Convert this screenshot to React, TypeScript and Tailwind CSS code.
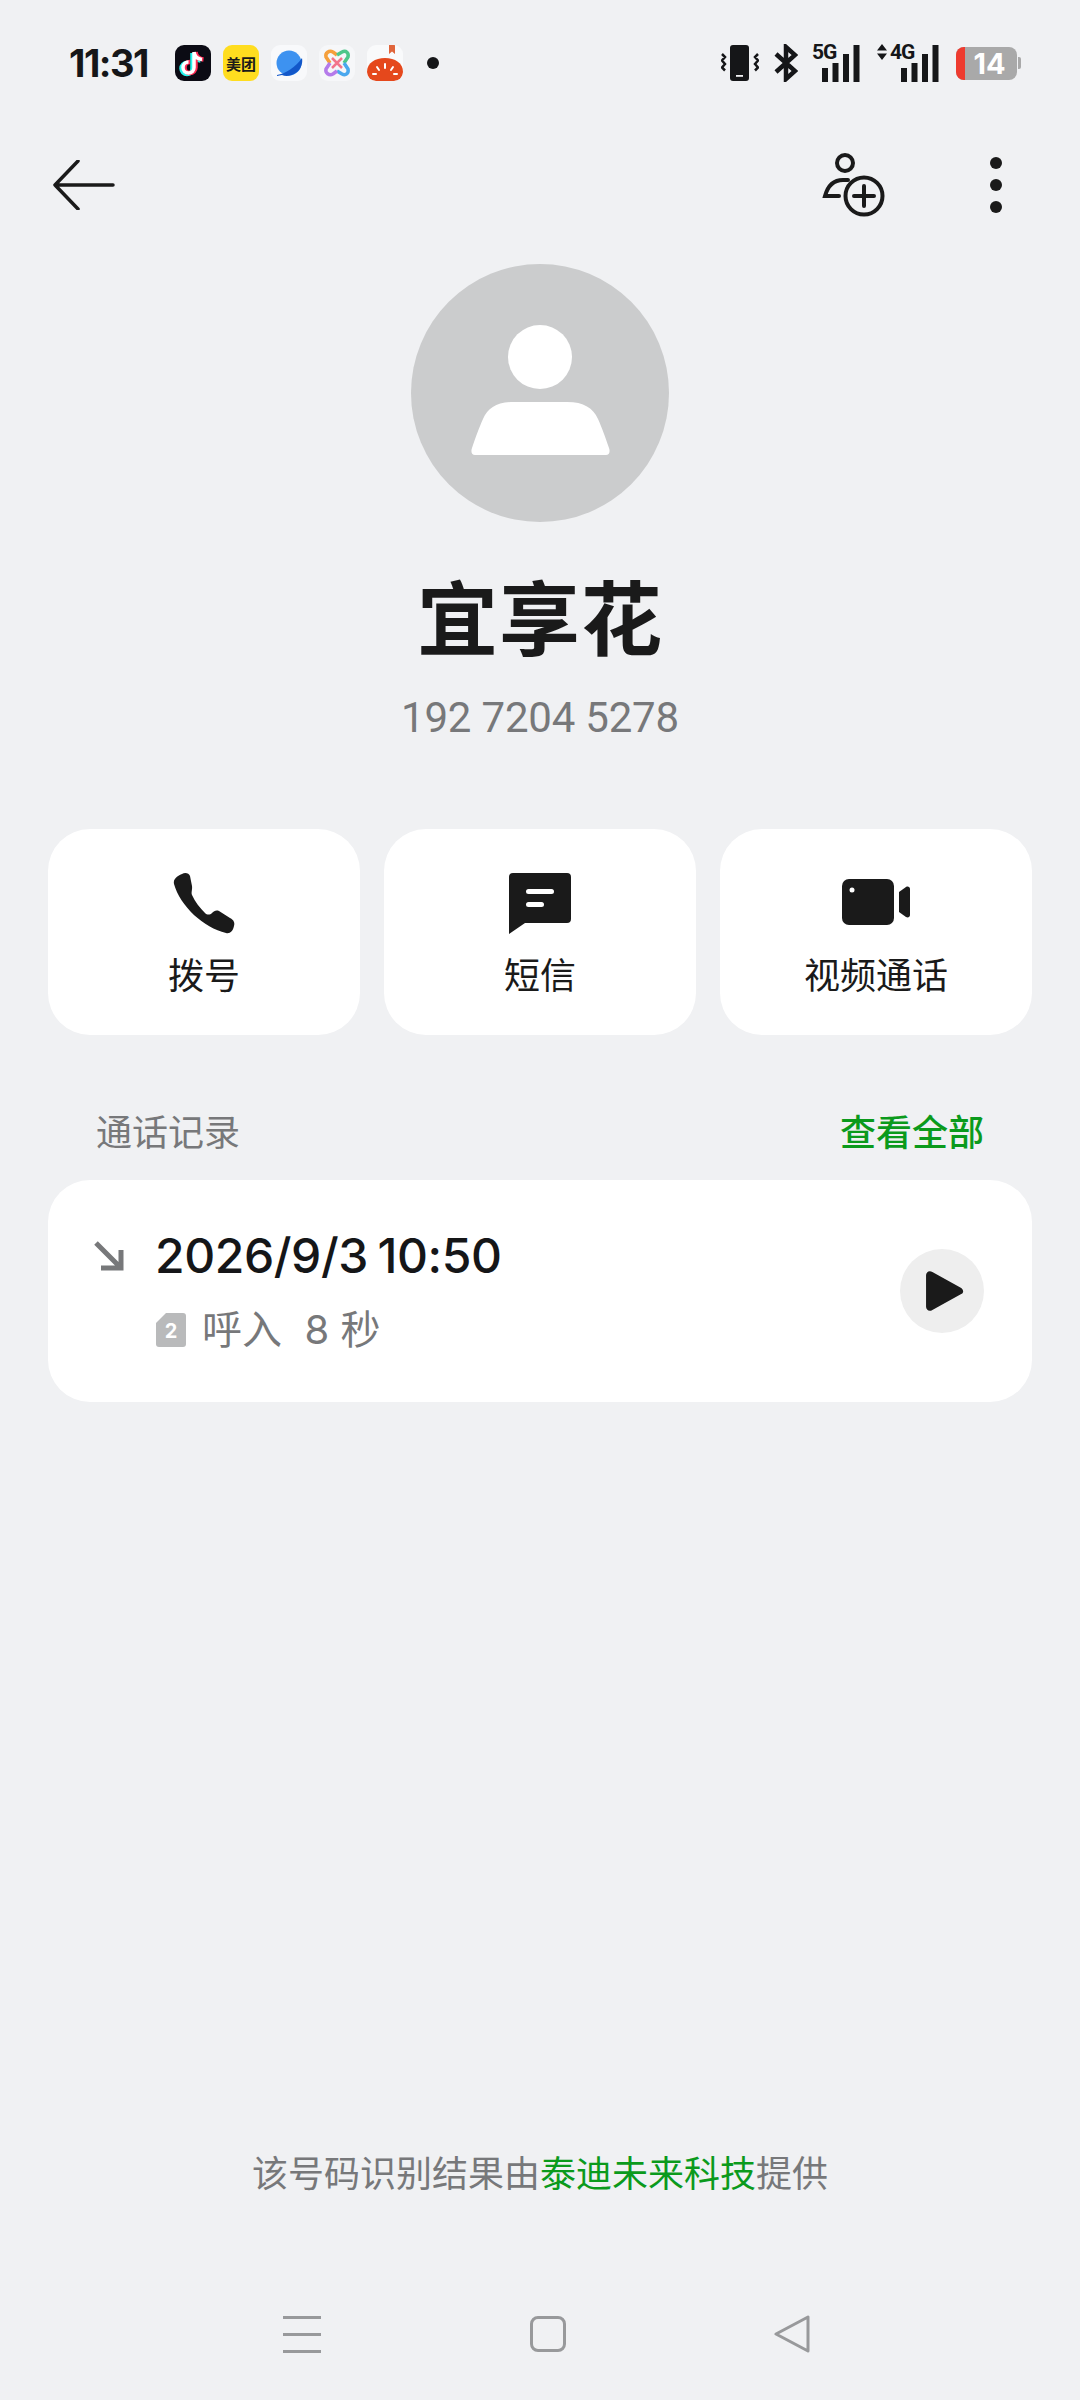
const sans = "font-['Inter','Noto_Sans_CJK_SC',sans-serif]"

function AppIcon({ className, children }: { className: string; children: React.ReactNode }) {
  return <div className={`size-9 rounded-[9px] overflow-hidden flex items-center justify-center ${className}`}>{children}</div>
}

function SignalBars({ className }: { className: string }) {
  return (
    <svg viewBox="0 0 38 37" className={`absolute bottom-0 w-[38px] h-[37px] ${className}`} fill="#151618">
      <rect x="0" y="23" width="6" height="14" />
      <rect x="10.500" y="18" width="6" height="19" />
      <rect x="21" y="9" width="6" height="28" />
      <rect x="31.500" y="0" width="6" height="37" />
    </svg>
  )
}

function StatusBar() {
  return (
    <div className="h-[124px] pt-[2px] flex items-center pl-[69px] pr-[59px]">
      <span className="text-[38px] leading-none font-bold text-[#151618] tracking-[-1.5px] w-[84px] font-['Inter',sans-serif]">11:31</span>
      <div className="flex items-center gap-[12px] ml-[22px]">
        <AppIcon className="bg-[#0b0b14]">
          <svg viewBox="0 0 36 36" className="size-9" fill="none" strokeWidth="4.500">
            <path d="M19 7v15.500a5.500 5.500 0 1 1-5.500-5.500M19 7c.5 4 3.500 7 8 7.500" stroke="#25f4ee" transform="translate(-1.500 1)" />
            <path d="M19 7v15.500a5.500 5.500 0 1 1-5.500-5.500M19 7c.5 4 3.500 7 8 7.500" stroke="#fe2c55" transform="translate(1.500 0)" />
            <path d="M19 7v15.500a5.500 5.500 0 1 1-5.500-5.500M19 7c.5 4 3.500 7 8 7.500" stroke="#fff" strokeWidth="3.500" />
          </svg>
        </AppIcon>
        <AppIcon className="bg-[#ffdd1f]">
          <span className="text-[15px] leading-none font-bold text-[#1a1a1a] whitespace-nowrap font-['Noto_Sans_CJK_SC',sans-serif]">美团</span>
        </AppIcon>
        <AppIcon className="bg-[#f8f9fb]">
          <svg viewBox="0 0 36 36" className="size-9">
            <circle cx="18" cy="18" r="12.500" fill="#3d92f0" />
            <path d="M6 30c8-1 19-8 25-17 1 5-1 11-5 14-5 4-11 5-15 3l-5 1z" fill="#1257c9" />
          </svg>
        </AppIcon>
        <AppIcon className="bg-[#f6f7f9]">
          <svg viewBox="0 0 36 36" className="size-9" fill="none" strokeWidth="3.500">
            <path d="M11 18 7 12c-1-4 3-7 7-5l4 3" stroke="#f5a03c" />
            <path d="m18 10 5-3c4-2 7 1 6 5l-4 6" stroke="#4fc78a" />
            <path d="m25 18 4 6c1 4-2 7-6 5l-5-3" stroke="#4aa8ee" />
            <path d="m18 26-4 3c-4 2-8-1-7-5l4-6" stroke="#b57bea" />
            <path d="m13 13 10 10M23 13 13 23" stroke="#f2768c" strokeWidth="2.500" />
          </svg>
        </AppIcon>
        <AppIcon className="bg-[#f9fafb]">
          <svg viewBox="0 0 36 36" className="size-9">
            <path d="M22 0h6v9l-3-2.500L22 9z" fill="#e0653b" />
            <path d="M0 27c0-9 8-14 18-14s18 5 18 14c0 6-4 9-9 9H9c-5 0-9-3-9-9z" fill="#e5481c" />
            <path d="M18 19v4M10 22l2 3M26 22l-2 3M6 29h3M27 29h3" stroke="#fff" strokeWidth="2" strokeLinecap="round" />
          </svg>
        </AppIcon>
        <div className="size-3 rounded-full bg-[#151618] ml-[12px]" />
      </div>
      <div className="ml-auto flex items-center">
        <svg viewBox="0 0 38 38" className="size-[38px]" fill="#151618">
          <rect x="9" y="1" width="19" height="36" rx="3" />
          <rect x="15" y="31" width="7" height="1.800" fill="#f0f1f3" />
          <path d="M1 10l3 3-3 3.500 3 3.500-3 3.500 3 3M37 10l-3 3 3 3.500-3 3.500 3 3.500-3 3" fill="none" stroke="#151618" strokeWidth="2.500" />
        </svg>
        <svg viewBox="0 0 24 38" className="w-[24px] h-[38px] ml-[15px]" fill="none" stroke="#151618" strokeWidth="4.500">
          <path d="M2 10l19 17-9 8V3l9 8L2 28" />
        </svg>
        <div className="relative w-[48px] h-[38px] ml-[14px]">
          <span className="absolute left-0 -top-[2px] text-[21px] leading-[21px] font-bold tracking-[-1px] text-[#151618] font-['Roboto',sans-serif]">5G</span>
          <SignalBars className="right-0" />
        </div>
        <div className="relative w-[62px] h-[38px] ml-[17px]">
          <svg viewBox="0 0 10 16" className="absolute left-0 top-0 w-[10px] h-4" fill="#151618">
            <path d="M5 0l5 6.500H0zM5 16l5-6.500H0z" />
          </svg>
          <span className="absolute left-[13px] -top-[2px] text-[21px] leading-[21px] font-bold tracking-[-1px] text-[#151618] font-['Roboto',sans-serif]">4G</span>
          <SignalBars className="right-0" />
        </div>
        <div className="relative w-[61px] h-[33px] ml-[17px] rounded-[8px] bg-[#a9a9a9] overflow-hidden flex items-center justify-center">
          <div className="absolute left-0 inset-y-0 w-[9px] bg-[#ee3b2f]" />
          <span className="text-[29px] leading-none font-bold text-white font-['Inter',sans-serif] ml-[6px]">14</span>
        </div>
        <div className="w-[3px] h-[12px] bg-[#a9a9a9] rounded-r-[2px] ml-[1px]" />
      </div>
    </div>
  )
}

function TopBar() {
  return (
    <div className="h-[122px] flex items-center pl-[53px] pr-[78px]">
      <svg viewBox="0 0 62 50" className="w-[62px] h-[50px]" fill="none" stroke="#1a1a1a" strokeWidth="3.500" strokeLinecap="round" strokeLinejoin="round">
        <path d="M60 25H2M25 1 2 25l23 24" />
      </svg>
      <svg viewBox="0 0 64 64" className="size-16 ml-auto" fill="none" stroke="#1a1a1a" strokeWidth="4" strokeLinecap="round">
        <circle cx="23" cy="10" r="8" />
        <path d="M26 27h-5C12 27 6 32 3 43h14" />
        <circle cx="42" cy="43" r="18.500" />
        <path d="M32 43h20M42 33v20" />
      </svg>
      <div className="flex flex-col gap-[10px] ml-[104px]">
        <div className="size-3 rounded-full bg-[#1a1a1a]" />
        <div className="size-3 rounded-full bg-[#1a1a1a]" />
        <div className="size-3 rounded-full bg-[#1a1a1a]" />
      </div>
    </div>
  )
}

function ActionCard({ label, children }: { label: string; children: React.ReactNode }) {
  return (
    <div className="bg-white rounded-[42px] h-[206px] flex flex-col items-center pt-[42px]">
      <div className="h-[64px] flex items-center justify-center">{children}</div>
      <span className="mt-[19px] text-[36px] leading-[44px] text-[#1a1a1a]">{label}</span>
    </div>
  )
}

export default function App() {
  return (
    <div className={`w-[1080px] h-[2400px] bg-[#f0f1f3] flex flex-col ${sans}`}>
      <StatusBar />
      <TopBar />

      <div className="mt-[18px] flex flex-col items-center">
        <div className="size-[258px] rounded-full bg-[#cbcccd] flex flex-col items-center pt-[61px]">
          <div className="size-16 rounded-full bg-white" />
          <svg viewBox="0 0 139 53" className="w-[139px] h-[53px] mt-[13px]" fill="#fff">
            <path d="M43 0H96C113 0 122 6 127 17C131 26 134 34 138 46C139.500 50 138 53 135 53H4C1 53-.5 50 1 46C5 34 8 26 12 17C17 6 26 0 43 0Z" />
          </svg>
        </div>
        <h1 className="mt-[50px] text-[81px] leading-[96px] font-bold tracking-[1px] text-[#1a1a1a]">宜享花</h1>
        <p className="mt-[25px] text-[42px] leading-[50px] text-[#77787a] tracking-[-0.2px] font-['Roboto',sans-serif]">192 7204 5278</p>
      </div>

      <div className="mt-[86px] px-[48px] grid grid-cols-3 gap-[24px]">
        <ActionCard label="拨号">
          <svg viewBox="-1 -1 62 62" className="size-[62px]" fill="#1a1a1a">
            <path d="M8 1C11-1 15 0 16 3L18 13C18.500 17 17 19 18 22C21 29 26 35 31 40C33 42 36 42 38 40C40 38 42 37 45 38L56 45C60 47 61 50 60 53C59 58 56 61 52 60C30 55 6 33 0 11C-1 6 3 3 8 1Z" />
          </svg>
        </ActionCard>
        <ActionCard label="短信">
          <svg viewBox="0 0 64 64" className="size-16" fill="#1a1a1a">
            <path d="M5 2h54a4 4 0 0 1 4 4v42a4 4 0 0 1-4 4H17L1 63V6a4 4 0 0 1 4-4z" />
            <rect x="18" y="18" width="28" height="5" rx="2.500" fill="#fff" />
            <rect x="18" y="31" width="18" height="5" rx="2.500" fill="#fff" />
          </svg>
        </ActionCard>
        <ActionCard label="视频通话">
          <svg viewBox="0 0 68 64" className="w-[68px] h-16" fill="#1a1a1a">
            <rect x="0" y="8" width="52" height="46" rx="7" />
            <circle cx="10" cy="19" r="2.500" fill="#fff" />
            <path d="M57 21l7-5c2-1 4 0 4 2v26c0 2-2 3-4 2l-7-5z" />
          </svg>
        </ActionCard>
      </div>

      <div className="mt-[71px] px-[96px] flex justify-between items-center h-[54px]">
        <span className="text-[36px] leading-none text-[#77787a]">通话记录</span>
        <span className="text-[36px] leading-none font-medium text-[#0b9a1c]">查看全部</span>
      </div>

      <div className="mt-[20px] mx-[48px] h-[222px] bg-white rounded-[42px] flex items-center pl-[46px] pr-[48px]">
        <div className="flex flex-col self-stretch pt-[45px]">
          <div className="flex items-center h-[62px]">
            <svg viewBox="0 0 30 30" className="size-[30px]" fill="none" stroke="#77787a" strokeWidth="5">
              <path d="M2 2l24 24M27 9v18H7" />
            </svg>
            <span className="ml-[31px] text-[48px] leading-none font-medium text-[#151618] font-['Inter',sans-serif] tracking-[-0.4px] [word-spacing:-3px]">2026/9/3 10:50</span>
          </div>
          <div className="flex items-center ml-[62px] mt-[18px] h-[50px]">
            <svg viewBox="0 0 30 34" className="w-[30px] h-[34px]">
              <path d="M10 0h17a3 3 0 0 1 3 3v28a3 3 0 0 1-3 3H3a3 3 0 0 1-3-3V10z" fill="#b9babb" />
              <text x="15" y="25" textAnchor="middle" fontSize="20" fontWeight="700" fill="#fff" fontFamily="Inter, sans-serif">2</text>
            </svg>
            <span className="ml-[16px] text-[40px] leading-none text-[#77787a] whitespace-pre">呼入  8 秒</span>
          </div>
        </div>
        <div className="ml-auto size-[84px] rounded-full bg-[#eeeeee] flex items-center justify-center">
          <svg viewBox="0 0 36 38" className="w-[38px] h-[40px] ml-[6px]" fill="#1a1a1a">
            <path d="M0 4c0-3 3-5 6-3l27 15c3 2 3 5 0 6L6 37c-3 2-6 0-6-3z" />
          </svg>
        </div>
      </div>

      <p className="mt-auto text-[36px] leading-[44px] text-[#77787a] text-center">
        该号码识别结果由<span className="text-[#0b9a1c]">泰迪未来科技</span>提供
      </p>

      <div className="mt-[118px] mb-[46px] h-[40px] flex items-center pl-[283px]">
        <div className="w-[38px] flex flex-col gap-[14px]">
          <div className="h-[3px] bg-[#98999b]" />
          <div className="h-[3px] bg-[#98999b]" />
          <div className="h-[3px] bg-[#98999b]" />
        </div>
        <div className="ml-[209px] size-9 rounded-[8px] border-[3px] border-[#98999b]" />
        <svg viewBox="0 0 36 38" className="ml-[208px] w-[36px] h-[38px]" fill="none" stroke="#98999b" strokeWidth="3" strokeLinejoin="round">
          <path d="M34 2v34L2 19z" />
        </svg>
      </div>
    </div>
  )
}
